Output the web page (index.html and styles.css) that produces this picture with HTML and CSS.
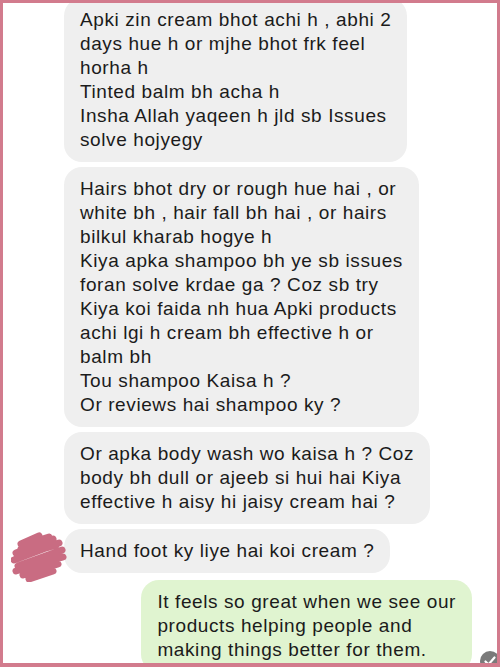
FILE: index.html
```html
<!DOCTYPE html>
<html>
<head>
<meta charset="utf-8">
<link rel="stylesheet" href="styles.css">
</head>
<body>
<div class="frame">
  <div class="chat">
    <div class="bubble in first">Apki zin cream bhot achi h , abhi 2<br>days hue h or mjhe bhot frk feel<br>horha h<br>Tinted balm bh acha h<br>Insha Allah yaqeen h jld sb Issues<br>solve hojyegy</div>
    <div class="bubble in">Hairs bhot dry or rough hue hai , or<br>white bh , hair fall bh hai , or hairs<br>bilkul kharab hogye h<br>Kiya apka shampoo bh ye sb issues<br>foran solve krdae ga ? Coz sb try<br>Kiya koi faida nh hua Apki products<br>achi lgi h cream bh effective h or<br>balm bh<br>Tou shampoo Kaisa h ?<br>Or reviews hai shampoo ky ?</div>
    <div class="bubble in">Or apka body wash wo kaisa h ? Coz<br>body bh dull or ajeeb si hui hai Kiya<br>effective h aisy hi jaisy cream hai ?</div>
    <div class="bubble in">Hand foot ky liye hai koi cream ?</div>
    <div class="bubble out">It feels so great when we see our<br>products helping people and<br>making things better for them.</div>
  </div>
  <svg class="scribble" width="56" height="52" viewBox="0 0 56 52">
    <path d="M10 14 L28 6 L22 12 L38 7 M5 23 L42 9 M3 30 L48 13 M7 36 L51 20 M5 41 L52 27 M12 45 L47 34 M18 49 L42 41 M10 19 L35 11 M6 27 L45 15" stroke="#c96c82" stroke-width="7" stroke-linecap="round" stroke-linejoin="round" fill="none"/>
  </svg>
  <svg class="check" width="20" height="20" viewBox="0 0 20 20">
    <circle cx="10" cy="10" r="10" fill="#7a7a7a"/>
    <path d="M5.5 10.5 L8.5 13.5 L14.5 6.5" stroke="#fff" stroke-width="2.2" fill="none" stroke-linecap="round" stroke-linejoin="round"/>
  </svg>
</div>
</body>
</html>
```
FILE: styles.css
```css
html, body {
  margin: 0;
  padding: 0;
  background: #fff;
}
.frame {
  position: relative;
  box-sizing: border-box;
  width: 500px;
  height: 667px;
  border: 3px solid #d27b8d;
  border-bottom-width: 4px;
  overflow: hidden;
  background: #fff;
}
.chat {
  display: flex;
  flex-direction: column;
  gap: 5px;
  padding: 0 25px 0 61px;
  font-family: "Liberation Sans", Arial, sans-serif;
  font-size: 19px;
  letter-spacing: 0.6px;
  line-height: 24px;
  color: #1b1b1b;
}
.bubble {
  padding: 10px 16px;
  border-radius: 18px;
  white-space: nowrap;
  width: fit-content;
}
.bubble.first {
  margin-top: -5px;
}
.in {
  background: #efefef;
  align-self: flex-start;
}
.out {
  background: #e0f4d0;
  align-self: flex-end;
  margin-top: 2px;
}
.scribble {
  position: absolute;
  left: 8px;
  top: 527px;
}
.check {
  position: absolute;
  left: 477px;
  top: 648px;
}
```
